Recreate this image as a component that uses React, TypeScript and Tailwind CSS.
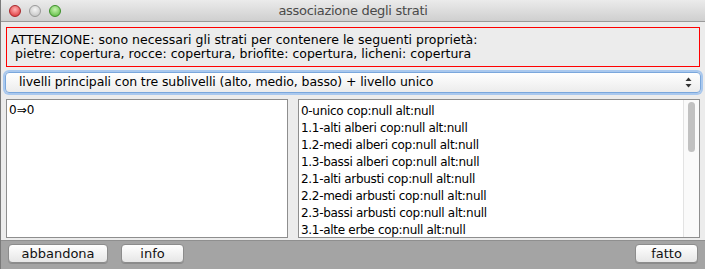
import React from "react";

const items = [
  "0-unico cop:null alt:null",
  "1.1-alti alberi cop:null alt:null",
  "1.2-medi alberi cop:null alt:null",
  "1.3-bassi alberi cop:null alt:null",
  "2.1-alti arbusti cop:null alt:null",
  "2.2-medi arbusti cop:null alt:null",
  "2.3-bassi arbusti cop:null alt:null",
  "3.1-alte erbe cop:null alt:null",
];

function Light({ from, to, border }: { from: string; to: string; border: string }) {
  return (
    <div
      className="w-[12px] h-[12px] rounded-full border"
      style={{ background: `radial-gradient(circle at 50% 35%, ${from}, ${to})`, borderColor: border }}
    />
  );
}

function Btn({ label, w }: { label: string; w: string }) {
  return (
    <div
      className={`${w} h-[19px] rounded-[4px] border border-[#8c8c8c] bg-gradient-to-b from-[#ffffff] to-[#e6e6e6] flex items-center justify-center text-[13px] text-[#111] shadow-[0_1px_0_rgba(0,0,0,0.15)]`}
    >
      {label}
    </div>
  );
}

export default function App() {
  return (
    <div
      className="w-[705px] h-[269px] bg-[#ececec] flex flex-col overflow-hidden border-l border-[#7a7a7a]"
      style={{ fontFamily: '"DejaVu Sans", "Liberation Sans", sans-serif' }}
    >
      <div className="h-[22px] shrink-0 bg-gradient-to-b from-[#ebebeb] to-[#cfcfcf] border-b border-[#9a9a9a] relative flex items-center justify-center">
        <div className="absolute left-[8px] top-[5px] flex gap-[8px]">
          <Light from="#ffb3b3" to="#d9262a" border="#a8272a" />
          <Light from="#f5f5f5" to="#bdbdbd" border="#9a9a9a" />
          <Light from="#c8f3b0" to="#4fb534" border="#3b8f28" />
        </div>
        <span className="text-[13px] text-[#4a4a4a] tracking-[-0.3px]">associazione degli strati</span>
      </div>

      <div className="mx-[5px] mt-[5px] h-[40px] border border-[#ff0000] px-[4px] pt-[5px] text-[12.5px] leading-[14px] text-black">
        <div>ATTENZIONE: sono necessari gli strati per contenere le seguenti proprietà:</div>
        <div> &nbsp;pietre: copertura, rocce: copertura, briofite: copertura, licheni: copertura</div>
      </div>

      <div className="mx-[4px] mt-[5px] h-[21px] rounded-[4px] border border-[#7aa7dc] shadow-[0_0_0_2px_#a9c8ee] bg-gradient-to-b from-[#ffffff] to-[#ececec] flex items-center pl-[13px] pr-[8px] text-[12.5px] text-black">
        <span className="flex-1 tracking-[-0.1px]">livelli principali con tre sublivelli (alto, medio, basso) + livello unico</span>
        <svg width="7" height="11" viewBox="0 0 7 11">
          <path d="M3.5 0.5 L6.5 4 H0.5 Z" fill="#333" />
          <path d="M3.5 10.5 L6.5 7 H0.5 Z" fill="#333" />
        </svg>
      </div>

      <div className="flex mt-[6px] h-[139px] gap-[10px] px-[5px]">
        <div className="w-[282px] border border-[#8e8e8e] bg-white px-[2px] pt-[2px] text-[12px] leading-[17px]">
          0⇒0
        </div>
        <div className="flex-1 border border-[#8e8e8e] bg-white flex">
          <div className="flex-1 px-[2px] pt-[3px] text-[12px] leading-[17px] text-black tracking-[-0.3px]">
            {items.map((t) => (
              <div key={t}>{t}</div>
            ))}
          </div>
          <div className="w-[16px] border-l border-[#e3e3e3] bg-[#fafafa] flex justify-center pt-[2px]">
            <div className="w-[7px] h-[50px] rounded-full bg-[#c1c1c1]" />
          </div>
        </div>
      </div>

      <div className="flex-1 mt-[2px] bg-[#a4a4a4] border-t border-[#8f8f8f] flex items-start pt-[3px] px-[7px] gap-[13px]">
        <Btn label="abbandona" w="w-[100px]" />
        <Btn label="info" w="w-[63px]" />
        <div className="flex-1" />
        <Btn label="fatto" w="w-[63px]" />
      </div>
    </div>
  );
}
